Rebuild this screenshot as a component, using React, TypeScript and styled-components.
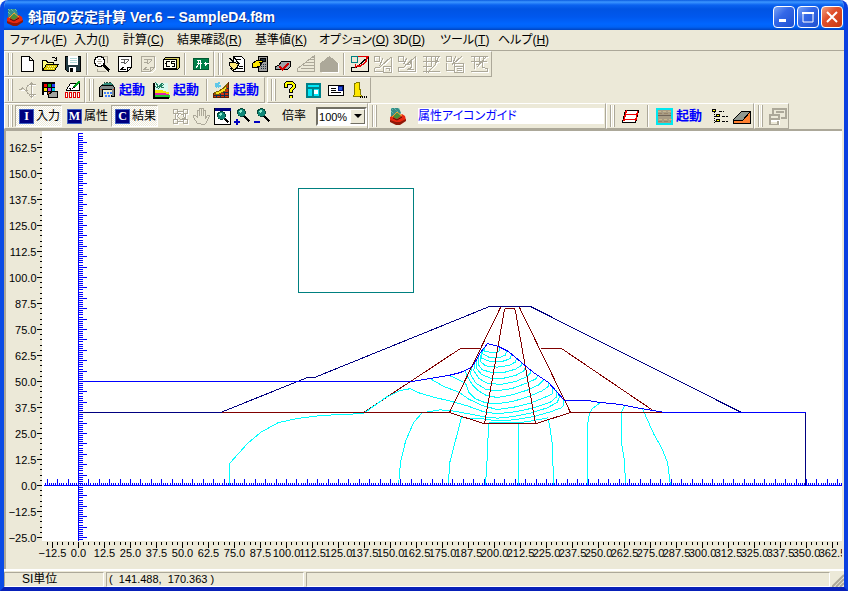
import React from "react";
import styled, { createGlobalStyle, css } from "styled-components";

const FACE = "#ece9d8";
const SHADOW = "#aca899";
const UI_FONT = '"Liberation Sans", "Noto Sans CJK JP", sans-serif';

const GlobalStyle = createGlobalStyle`
  * { box-sizing: border-box; }
  body { margin: 0; background: #fff; font: 12px/16px ${UI_FONT}; color: #000; }
  button, select, input { font: inherit; color: inherit; }
`;

const Window = styled.div`
  display: flex;
  flex-direction: column;
  min-height: 100vh;
  border: solid #0831d9;
  border-width: 0 4px 4px;
  border-color: #0831d9 #0a3fe0 #0820b8 #0a4be6;
  border-radius: 8px 8px 0 0;
  background: ${FACE};
  overflow: hidden;
`;

const TitleBar = styled.header`
  display: flex;
  align-items: center;
  height: 30px;
  margin: 0 -4px;
  padding: 3px 5px 0 6px;
  background: linear-gradient(#0a5be0 0, #3c96ff 2px, #0b63f0 5px, #0054e3 9px, #0058ee 17px, #0066ff 24px, #0062f5 27px, #0044c0 30px);
`;

const Title = styled.h1`
  flex: 1;
  margin: 0 0 0 5px;
  font: bold 14px/18px ${UI_FONT};
  color: #fff;
  text-shadow: 1px 1px #0a2f8f;
  white-space: nowrap;
`;

const WindowButtons = styled.div`
  display: flex;
  gap: 2px;
`;

const WindowButton = styled.button<{ $close?: boolean }>`
  display: grid;
  place-items: center;
  width: 22px;
  height: 22px;
  padding: 0;
  border: 1px solid #fff;
  border-radius: 4px;
  background: ${(p) =>
    p.$close
      ? "linear-gradient(135deg, #f0a080, #e0502c 40%, #c83810)"
      : "linear-gradient(135deg, #7ba5f5, #3468e8 40%, #1d50d0)"};
`;

const MenuBar = styled.nav`
  display: flex;
  height: 21px;
  padding: 0 0 0 6px;
  border-bottom: 1px solid ${SHADOW};
  font-feature-settings: "palt";
`;

const MenuItem = styled.button<{ $w: number }>`
  width: ${(p) => p.$w}px;
  padding: 0;
  border: 0;
  background: none;
  text-align: left;
  white-space: nowrap;
  line-height: 18px;
`;

const ToolRow = styled.div`
  display: flex;
  height: 26px;
`;

const Band = styled.div<{ $gap?: number }>`
  display: flex;
  align-items: center;
  height: 26px;
  margin-right: ${(p) => p.$gap ?? 0}px;
  border: 1px solid;
  border-color: #fff ${SHADOW} ${SHADOW} #fff;
`;

const Grip = styled.span`
  width: 5px;
  height: 22px;
  margin: 0 2px 0 3px;
  border: solid ${SHADOW};
  border-width: 0 1px 0 1px;
  background: linear-gradient(90deg, #fff 1px, ${FACE} 1px, ${FACE} 2px, #fff 2px);
`;

const Sep = styled.span<{ $m?: number }>`
  width: 2px;
  height: 22px;
  margin: 0 ${(p) => p.$m ?? 1}px;
  border-left: 1px solid ${SHADOW};
  border-right: 1px solid #fff;
`;

const Tool = styled.button<{ $w?: number }>`
  display: grid;
  place-items: center;
  width: ${(p) => p.$w ?? 23}px;
  height: 22px;
  padding: 0;
  border: 0;
  background: none;
`;

const ViewTools = styled.div`
  display: flex;
  margin-left: 10px;
`;

const Launch = styled.button`
  display: flex;
  align-items: center;
  gap: 3px;
  width: 54px;
  height: 22px;
  padding: 0 2px;
  border: 0;
  background: none;
  color: #0000ff;
  font-weight: bold;
  font-size: 13px;
  white-space: nowrap;
`;

const Toggle = styled.button<{ $on?: boolean }>`
  display: flex;
  align-items: center;
  gap: 2px;
  width: 47px;
  height: 22px;
  margin-right: 1px;
  padding: 0 0 0 3px;
  border: 1px solid transparent;
  background: none;
  white-space: nowrap;
  ${(p) =>
    p.$on &&
    css`
      border-color: ${SHADOW} #fff #fff ${SHADOW};
      background: repeating-conic-gradient(#fff 0 25%, ${FACE} 0 50%) 0 0 / 2px 2px;
    `}
`;

const Badge = styled.span`
  display: grid;
  place-items: center;
  width: 15px;
  height: 15px;
  border: 1px solid #4060c0;
  background: #000080;
  color: #fff;
  font: bold 12px/13px "Liberation Serif", serif;
`;

const ZoomLabel = styled.label`
  display: flex;
  align-items: center;
  gap: 10px;
  margin-left: 10px;
  white-space: nowrap;
`;

const SelectBox = styled.span`
  display: flex;
  position: relative;
  width: 51px;
  height: 19px;
  border: 2px solid;
  border-color: #716f64 #fff #fff #716f64;
  background: #fff;
`;

const Select = styled.select`
  appearance: none;
  width: 100%;
  padding: 0 0 0 1px;
  border: 0;
  background: none;
  font-size: 11px;
`;

const SelectArrow = styled.span`
  display: grid;
  place-items: center;
  position: absolute;
  top: 0;
  right: 0;
  width: 15px;
  height: 15px;
  border: 1px solid;
  border-color: #fff #716f64 #716f64 #fff;
  background: ${FACE};
  pointer-events: none;
`;

const GuideField = styled.input`
  width: 186px;
  height: 16px;
  margin: 0 1px 0 3px;
  padding: 0;
  border: 0;
  background: #fff;
  color: #0000ff;
  font-feature-settings: "palt";
`;

const Workspace = styled.main`
  flex: 1;
  display: grid;
  grid-template: minmax(410px, 1fr) 28px / 36px minmax(0, 1fr);
  margin-right: 2px;
  border: solid ${SHADOW};
  border-width: 2px 0 0 2px;
`;

const RulerText = css`
  font: 11px "Liberation Sans", sans-serif;
  shape-rendering: crispEdges;
`;

const LeftRuler = styled.svg`
  ${RulerText}
  width: 36px;
  height: 100%;
  overflow: visible;
`;

const Plot = styled.svg`
  width: 100%;
  height: 100%;
  background: #fff;
  shape-rendering: crispEdges;
`;

const BottomRuler = styled.svg`
  ${RulerText}
  grid-column: 1 / -1;
  width: 100%;
  height: 28px;
`;

const StatusBar = styled.footer`
  display: flex;
  align-items: flex-end;
  gap: 2px;
  height: 18px;
  border-top: 2px solid #fff;
`;

const StatusPanel = styled.div<{ $w?: number; $pad: number }>`
  flex: ${(p) => (p.$w ? `0 0 ${p.$w}px` : "1")};
  height: 15px;
  padding-left: ${(p) => p.$pad}px;
  border: 1px solid;
  border-color: ${SHADOW} #fff #fff ${SHADOW};
  line-height: 13px;
  white-space: pre;
`;

const Coordinates = styled.output`
  font-size: 11px;
`;

const SizeGrip = styled.svg`
  width: 12px;
  height: 14px;
`;

/* ---------- icons ---------- */

type IconProps = { children: React.ReactNode; w?: number };
const Icon = ({ children, w = 18 }: IconProps) => (
  <svg width={w} height="18" viewBox={`0 0 ${w} 18`} fill="none" stroke="#000" shapeRendering="crispEdges" aria-hidden="true">
    <g transform="translate(.5 .5)">{children}</g>
  </svg>
);

const AppIcon = () => (
  <svg width="17" height="18" viewBox="0 0 17 18" aria-hidden="true">
    <path d="M2 1h8l2 5-3 4H2z" fill="#388c88" />
    <path d="M2 1l2 2M5 1l4 4M2 4l4 4M9 1l2 2" stroke="#80d8c0" strokeDasharray="1 1" />
    <path d="M1 10l4-2 4 2 4-3 3 2 1 4-6 4H7l-6-3z" fill="#e82810" />
    <path d="M1 13l6 2h4l6-3v2l-6 4H7l-6-3z" fill="#901808" />
    <path d="M4 10l4-4 4 3-4 3z" fill="#489038" />
    <path d="M3 10l5-5 5 4" fill="none" stroke="#f8a820" />
    <path d="M4 11l4 2 5-3" fill="none" stroke="#501008" />
  </svg>
);
const NewIcon = () => <Icon><path fill="#fff" d="M3 1h8l4 4v11H3zM11 1v4h4" /></Icon>;
const OpenIcon = () => (
  <Icon>
    <path d="M10 3c2-2 4-1 5 1M15 1v4h-3" />
    <path fill="#ffff80" d="M1 15V5h4l1 2h6v2" />
    <path fill="#d8c800" d="M1 15l4-6h12l-4 6z" />
    <path stroke="#fff8a0" d="M6 11h8M5 13h8" strokeDasharray="1 1" />
  </Icon>
);
const SaveIcon = () => (
  <Icon>
    <path fill="#203840" d="M1 1h15v15H3l-2-2z" />
    <path fill="#fff" stroke="#fff" d="M4 1h9v8H4zM5 12h6v4H5z" />
    <path stroke="none" fill="#000" d="M5 12h3v4H5z" />
    <path stroke="#b0d8d8" d="M5 3h7M5 5h7M5 7h7" />
  </Icon>
);
const PreviewIcon = () => (
  <Icon>
    <path stroke={SHADOW} d="M7 1h7v6M4 13v3h8" />
    <circle cx="6" cy="6" r="5" fill="#fff" strokeWidth="1.4" />
    <path stroke={SHADOW} d="M4 4h3M3 6h5M4 8h3" />
    <path strokeWidth="3" d="M10 10l6 5" />
  </Icon>
);
const DocIcon = ({ off }: { off?: boolean }) => {
  const c = off ? SHADOW : "#000";
  return (
    <Icon>
      {off && <path stroke="#fff" d="M3 2h13v12l-3 3H3z" />}
      <path fill={off ? FACE : "#fff"} stroke={c} d="M2 1h13v11l-4 4H2z" />
      <path stroke={c} d="M15 12h-4v4M4 14l4-3M4 14h5" />
      <path stroke={off ? SHADOW : "#606060"} d="M4 4h8M4 7h4M8 4v4M8 9l4-4" />
    </Icon>
  );
};
const CsIcon = () => (
  <Icon>
    <path fill="#d8d060" d="M1 4l2-2h14v10l-2 2H1z" />
    <path fill="#fffff0" d="M1 4h13v9H1z" />
    <path strokeWidth="1.6" d="M7 6H4v5h3M12 6H9v2h3v3H9" />
    <path d="M2 8h1" />
  </Icon>
);
const ExitIcon = () => (
  <Icon>
    <path fill="#008048" stroke="#005830" d="M1 3h15v11H1z" />
    <path stroke="#fff" d="M4 5h4v8M6 5v4l-3 4M4 8h5M11 8h5M13 6v4M14 7v2" />
  </Icon>
);
const HandDocIcon = () => (
  <Icon>
    <path fill="#fff" d="M5 1h8l3 3v12H5z" />
    <path fill="#ffe878" d="M1 7h6l3 2-2 4-4 2-2-2h2l-3-3z" />
    <path strokeWidth="1.5" d="M5 1l6 8M1 3l5 4" />
    <path d="M8 13h6M10 11h4M8 4h4" />
  </Icon>
);
const HandCalcIcon = () => (
  <Icon>
    <path fill="#a0a0a0" d="M7 1h9v15H7z" />
    <path fill="#203040" d="M9 3h5v3H9z" />
    <path stroke="#203040" strokeDasharray="1 1" d="M9 9h6M9 11h6M9 13h6" />
    <path fill="#ffe800" d="M1 8l4-3h6v2H8l2 1-2 3-4 1H1z" />
  </Icon>
);
const CheckSlabIcon = () => (
  <Icon>
    <path fill="#a0a4a8" d="M1 11l3-1 3-4h9v5l-3 3H1z" />
    <path stroke="#d00000" strokeWidth="2" d="M5 11l3 3 6-6" />
  </Icon>
);
const StairsIcon = () => (
  <Icon w={20}>
    <path stroke="#fff" d="M2 18h18V1" />
    <path stroke={SHADOW} d="M1 16h17V0L1 13zM6 10h12M8 7h10M4 13h14M12 4h6M15 2h3" />
  </Icon>
);
const HouseIcon = () => (
  <Icon w={20}>
    <path stroke="#fff" d="M2 17h17V7" />
    <path fill={SHADOW} stroke={SHADOW} d="M1 8l9-7 8 7v8H1z" />
  </Icon>
);
const ArcIcon = () => (
  <Icon w={20}>
    <path d="M1 12h5L18 1v15H1z" />
    <path stroke="#e00000" strokeWidth="1.5" d="M7 1h11M17 1c-1 6-5 10-12 10M5 8v4" />
    <path stroke="#008080" strokeWidth="1.5" fill={FACE} d="M1 1h6v6H1z" />
  </Icon>
);
const offParts = [
  "M1 1h5v5H1zM1 12h5L18 1M1 12v4h8M18 1v9M9 3l-3 8M10 11h8v6h-8zM12 13h4v2",
  "M1 1h5v5H1zM1 12h5L18 1v15H1zM7 9h5l2-3v6l-4 2h6M9 3l-3 6",
  "M1 1h17M1 6h16M1 11h9M5 0v17M10 0v11M17 1l-3 8-7 7v1M1 16h17M14 1v8",
  "M1 1h5v5H1zM1 7v8h7M7 9L17 0M10 1L7 9M9 8h9v9H9zM9 11h9M11 13h5M11 15h5",
  "M1 1h17M1 6h16M5 0v13M10 1v6M17 1L7 12M6 9h4l3-3v6l5 1v3H6M1 16h17M14 1v5",
];
const OffIcon = ({ n }: { n: number }) => (
  <Icon w={20}>
    <path stroke="#fff" transform="translate(1 1)" d={offParts[n]} />
    <path stroke={SHADOW} d={offParts[n]} />
  </Icon>
);
const BranchIcon = () => (
  <Icon>
    <path stroke="#fff" d="M2 9h7M10 4h7M10 14h7M14 5v12" />
    <path stroke={SHADOW} d="M0 8h3l1-2 3 3h2M8 8c0-3 2-5 5-5h4M8 8c0 3 2 5 5 5h4M13 1v15M11 3l2-2 2 2M11 14l2 2 2-2" />
  </Icon>
);
const PaletteIcon = () => (
  <Icon>
    <path fill="#000" d="M1 1h12v12H1z" />
    <g stroke="none">
      <path fill="#f00000" d="M2 2h3v3H2z" /><path fill="#00b020" d="M6 2h3v3H6z" /><path fill="#2040ff" d="M10 2h3v3h-3z" />
      <path fill="#f8e000" d="M2 6h3v3H2z" /><path fill="#c030f0" d="M6 6h3v3H6z" /><path fill="#00c8e8" d="M10 6h3v3h-3z" />
      <path fill="#fff" d="M2 10h3v3H2z" /><path fill="#d86020" d="M6 10h3v3H6z" />
    </g>
    <path fill="#a0a4a0" d="M7 13l4-3h5v6H7z" />
  </Icon>
);
const MeterIcon = () => (
  <Icon>
    <path fill="#fff" d="M2 8l4-6h9v7H2z" />
    <path stroke="#00a020" strokeWidth="2" d="M9 6l6-6" />
    <path d="M5 7l2 1M8 7l3-2" />
    <path stroke="#e00000" fill="#fff" d="M1 11h2v5H1zM5 11h2v5H5zM9 11h2v5H9zM13 11h2v5h-2z" />
  </Icon>
);
const PrinterIcon = () => (
  <Icon>
    <path fill="#308878" stroke="#284838" strokeDasharray="2 1" d="M3 4l3-3h6l3 3z" />
    <path fill="#808888" d="M1 6l2-2h11l2 2v9h-3V8H4v7H1z" />
    <path fill="#f0f0d0" stroke="none" d="M4 8h9v5H4z" />
    <path stroke="#e04010" d="M2 8h1M14 8h1" />
    <path stroke="#4080ff" strokeWidth="2" strokeDasharray="2 1" d="M5 11h8M6 14h6" />
  </Icon>
);
const SlopeChartIcon = () => (
  <Icon>
    <path stroke="none" fill="#d8f8f0" d="M2 1h13v9H2z" />
    <path stroke="none" fill="#f0e800" d="M2 8l5 0 9 3v2H2z" />
    <path stroke="none" fill="#e020b0" d="M2 11h8l6 2H2z" />
    <path stroke="none" fill="#20c830" d="M2 13h15v3H2z" />
    <path stroke="#208060" d="M3 1l3 4 5-4M12 2L6 7l-3-2M5 5l7 1" />
    <path strokeWidth="2" d="M1 1v15h15" />
  </Icon>
);
const MeshSlopeIcon = () => (
  <Icon>
    <path fill="#d03010" stroke="#602000" d="M1 12l7-2 8-9v15H1z" />
    <path stroke="#103050" d="M4 11v5M8 10v6M12 6v10M1 14h15M6 11h10M10 7h6" />
    <path fill="#f8e020" stroke="#806000" d="M2 11c7-2 9-4 13-9l-2 7c-4 3-6 4-10 4z" />
    <path stroke="#60c8e8" strokeWidth="2" d="M3 2l4 4M7 1L3 6M2 4h6" />
  </Icon>
);
const HelpIcon = () => (
  <Icon>
    <path strokeWidth="4" d="M4 6V3l2-2h4l2 2v3L9 9v2M9 13v3" />
    <path stroke="#ffff00" strokeWidth="2" d="M4 5V3l2-2h4l2 2v3L9 9v1M9 14v2" />
  </Icon>
);
const PanelIcon = () => (
  <Icon>
    <path fill="#00e8f8" stroke="#008088" strokeWidth="2" d="M2 2h13v13H2zM2 6h13M8 6v9" />
    <path fill="#fff" stroke="#fff" d="M10 9h3v3h-3z" />
  </Icon>
);
const CardIcon = () => (
  <Icon>
    <path fill="#fff" d="M1 4h15v10H1z" />
    <path d="M3 7h5M3 9h5M3 11h10" />
    <path fill="#2858d8" stroke="#001080" d="M11 5h4v4h-4z" />
  </Icon>
);
const BootIcon = () => (
  <Icon>
    <path fill="#ffe800" stroke="#807800" d="M4 2l3-1h2v6l1 2v4l2 2H3l1-3z" />
    <path strokeDasharray="1 1" strokeWidth="2" d="M9 15h8" />
  </Icon>
);
const nodesPath = "M2 2h4v4H2zM12 2h4v4h-4zM2 12h4v4H2zM12 12h4v4h-4zM6 4h6M4 6v6M14 6v6M6 14h6M7 6l5 1 1 4-4 1-3-3z";
const NodesIcon = () => (
  <Icon>
    <path stroke="#fff" transform="translate(1 1)" d={nodesPath} />
    <path stroke={SHADOW} d={nodesPath} />
  </Icon>
);
const HandIcon = () => (
  <Icon>
    <path stroke={SHADOW} fill={FACE} d="M5 16l-4-6v-2h2l2 2V3h2v5V1h2v7V1h2v7V3h2v8l2-3h2l-3 7-2 2z" />
  </Icon>
);
const Glass = ({ minus, plus, frame }: { minus?: boolean; plus?: boolean; frame?: boolean }) => (
  <Icon>
    {frame && <path fill="#fff" d="M1 1h16v16H1z" />}
    {frame && <path stroke="#000080" strokeWidth="3" d="M1 2h16" />}
    <path strokeWidth="2.5" d={frame ? "M10 10l5 5" : "M10 8l6 6"} />
    <circle cx="8" cy={frame ? 8 : 5} r="4" fill="#108878" stroke="#084838" />
    <path stroke="#90f0d0" strokeWidth="1.5" d={frame ? "M6 8l2-2" : "M6 5l2-2"} />
    {(plus || minus) && <path stroke="#0000c0" strokeWidth="2" d="M0 14h6" />}
    {plus && <path stroke="#0000c0" strokeWidth="2" d="M3 11v6" />}
  </Icon>
);
const ShearIcon = () => (
  <Icon w={20}>
    <path fill="#fff" d="M5 3h13l-3 12H2z" />
    <path stroke="#f00000" strokeWidth="1.5" d="M5 7h11M4 12h11M6 3L3 14M17 4l-2 10" />
  </Icon>
);
const TextureIcon = () => (
  <Icon>
    <path fill="#a89c84" stroke="#00e8f0" strokeWidth="2" d="M1 1h15v15H1z" />
    <path stroke="#c8b890" strokeDasharray="3 2" d="M2 4h13M3 12h13" />
    <path stroke="#706458" d="M2 8h13" />
    <path stroke="#988468" strokeDasharray="4 2" d="M2 6h13M2 14h13" />
  </Icon>
);
const TreeIcon = () => (
  <Icon>
    <path strokeDasharray="1 1" d="M4 4v12M4 9h3M4 14h3" />
    <path strokeDasharray="3 1" d="M8 4h5M11 9h6M11 14h6" />
    <path fill="#ffff00" d="M2 2h3v2H2zM6 7h3v2H6zM6 12h3v2H6z" />
  </Icon>
);
const RampIcon = () => (
  <Icon w={20}>
    <path fill="#909890" d="M1 12l8-8h9l-8 9H1z" />
    <path fill="#ff8030" d="M1 13h9l8-9v12H1z" />
  </Icon>
);
const WindowsIcon = () => (
  <Icon w={20}>
    <path stroke="#fff" transform="translate(1 1)" d="M5 1h13v9h-6M2 7h8v6H2zM1 12h10v5H1z" />
    <path stroke={SHADOW} strokeWidth="2" d="M5 6V1h13v9h-5M8 4h8M2 7h9v4H2zM2 12v5h8v-4" />
  </Icon>
);

/* ---------- drawing ---------- */

const PX_PER_UNIT = 2.08;
const X0 = 78;
const Y0 = 485;
const sx = (v: number) => Math.round(X0 + v * PX_PER_UNIT);
const sy = (v: number) => Math.round(Y0 - v * PX_PER_UNIT);
const steps = (from: number, to: number, step: number) =>
  Array.from({ length: Math.round((to - from) / step) + 1 }, (_, i) => from + i * step);
const label = (v: number) => v.toFixed(1).replace("-", "−");

const VerticalRuler = () => (
  <LeftRuler>
    <g transform="translate(-5.5 -130.5)" stroke="#000">
      {steps(-25, 167.5, 2.5).map((v) => (
        <path key={v} d={`M${v % 12.5 ? 39 : 36} ${sy(v)}H42`} />
      ))}
      <g stroke="none" textAnchor="end">
        {steps(-25, 162.5, 12.5).map((v) => (
          <text key={v} x="36" y={sy(v) + 4}>{label(v)}</text>
        ))}
      </g>
    </g>
  </LeftRuler>
);

const HorizontalRuler = () => (
  <BottomRuler>
    <g transform="translate(-5.5 .5)" stroke="#000">
      {steps(-15, 367.5, 2.5).map((v) => (
        <path key={v} d={`M${sx(v)} 0V${v % 12.5 ? 3 : 6}`} />
      ))}
      <g stroke="none" textAnchor="middle">
        {steps(-12.5, 362.5, 12.5).map((v) => (
          <text key={v} x={sx(v)} y="15">{label(v)}</text>
        ))}
      </g>
    </g>
  </BottomRuler>
);

const axisPath = [
  `M43 ${Y0}H842`,
  `M78 132V540`,
  ...steps(-16, 367, 1).map((v) => `M${sx(v)} ${Y0}v${v % 5 ? -3 : -7}`),
  ...steps(-26, 169, 1).map((v) => `M78 ${sy(v)}h${v % 5 ? 4 : 8}`),
].join("");

/* Equipotential lines of the core, on a grid three times finer than the screen. */
const coreLines = [
  "253,172 253,184 275,185 290,187 298,180 298,168",
  "248,176 247,190 265,200 300,200 314,194 318,182",
  "243,182 244,203 268,213 305,213 328,205 333,194",
  "238,188 240,213 255,226 290,230 325,225 344,215 348,205",
  "233,197 233,222 245,238 275,246 310,246 345,236 362,225 362,215",
  "228,205 228,233 243,252 270,263 310,263 345,255 372,240 375,227",
  "223,214 220,240 235,264 260,278 300,282 345,273 378,259 390,248 390,240",
  "214,232 209,250 225,277 255,296 290,301 335,294 375,279 405,266 412,255",
  "193,241 203,262 215,282 232,300 258,315 290,321 335,313 380,299 415,283 430,268",
  "145,254 195,278 205,305 225,325 255,337 290,340 340,332 385,318 425,301 443,288 445,275",
  "90,265 130,288 175,305 205,326 245,345 290,357 340,350 390,338 430,322 455,310 458,290",
  "0,300 30,295 55,307 100,320 150,332 200,346 250,364 290,370 350,363 400,352 450,335 467,320 467,300",
  "65,367 120,358 155,361 200,369 250,379 290,383 340,378 390,368 440,352 470,336 476,322 475,308",
  "182,382 240,384 290,391 340,388 400,378 450,364 482,352 490,345 490,330",
  "265,397 310,397 355,397 400,390 443,382",
];

const flowLines = [
  "229,485 229,463 247,443 260,432 278,422 297,418 320,415 363,413 377,403 385,397 400,390 410,388",
  "422,412 413,422 405,441 400,462 398,485",
  "461,417 455,440 449,463 448,485",
  "488,423 487,453 485,485",
  "518,423 518,485",
  "548,420 549,424 552,445 553,485",
  "600,402 592,408 589,413 587,424 587,485",
  "624,405 621,412 621,443 624,460 625,485",
  "642,408 645,415 653,433 661,447 667,462 670,485",
];

const CrossSection = () => (
  <Plot role="img" aria-label="斜面断面図">
    <g transform="translate(-41.5 -130.5)" fill="none">
      <path stroke="#008080" d="M298 188H413V292H298z" />
      <path stroke="#800000" d="M363 412L460 348H480M540 348H561L654 411" />
      <g stroke="#00ffff">
        {flowLines.map((p) => <polyline key={p} points={p} />)}
        <g transform="translate(400 290) scale(.33333)">
          {coreLines.map((p) => <polyline key={p} points={p} vectorEffect="non-scaling-stroke" />)}
        </g>
      </g>
      <g stroke="#800000">
        <path d="M220 412H449M570 412H662" />
        <path d="M500 307L449 412L483 423H536L570 412L519 307" />
        <path d="M484 423L504 309L505 308H514L515 311L535 423" />
      </g>
      <path stroke="#0000ff" d={axisPath} />
      <path stroke="#000080" d="M79 412H220L307 377H314L489 306H530L741 412M805 412V485" />
      <polyline
        stroke="#0000ff"
        points="79,381 411,381 430,378 448,375 460,372 471,367 475,361 480,352 487,343 498,346 508,351 521,362 533,372 548,382 564,400 587,400 600,402 620,404 640,408 665,412 805,412"
      />
    </g>
  </Plot>
);

/* ---------- page ---------- */

const menus: [string, string, number][] = [
  ["ファイル", "F", 64], ["入力", "I", 49], ["計算", "C", 54], ["結果確認", "R", 78], ["基準値", "K", 64],
  ["オプション", "O", 74], ["3D", "D", 47], ["ツール", "T", 58], ["ヘルプ", "H", 58],
];

export default function App() {
  return (
    <Window>
      <GlobalStyle />
      <TitleBar>
        <AppIcon />
        <Title>斜面の安定計算 Ver.6 − SampleD4.f8m</Title>
        <WindowButtons>
          <WindowButton aria-label="最小化"><svg width="14" height="14"><path d="M2 9h7v3H2z" fill="#fff" /></svg></WindowButton>
          <WindowButton aria-label="最大化"><svg width="14" height="14"><path d="M2 3h10v9H2z" fill="none" stroke="#fff" /><path d="M1 2h12v2H1z" fill="#fff" /></svg></WindowButton>
          <WindowButton $close aria-label="閉じる"><svg width="14" height="14"><path d="M2 2l10 10M12 2L2 12" stroke="#fff" strokeWidth="2" /></svg></WindowButton>
        </WindowButtons>
      </TitleBar>
      <MenuBar>
        {menus.map(([text, key, w]) => (
          <MenuItem key={key} $w={w}>{text}(<u>{key}</u>)</MenuItem>
        ))}
      </MenuBar>
      <ToolRow>
        <Band>
          <Grip />
          <Tool aria-label="新規"><NewIcon /></Tool>
          <Tool aria-label="開く"><OpenIcon /></Tool>
          <Tool aria-label="保存"><SaveIcon /></Tool>
          <Sep $m={2} />
          <Tool aria-label="プレビュー"><PreviewIcon /></Tool>
          <Tool aria-label="計算書"><DocIcon /></Tool>
          <Tool aria-label="報告書" disabled><DocIcon off /></Tool>
          <Tool aria-label="CS"><CsIcon /></Tool>
          <Sep $m={2} />
          <Tool $w={25} aria-label="終了"><ExitIcon /></Tool>
        </Band>
        <Band>
          <Grip />
          <Tool aria-label="入力編集"><HandDocIcon /></Tool>
          <Tool aria-label="計算実行"><HandCalcIcon /></Tool>
          <Tool aria-label="チェック"><CheckSlabIcon /></Tool>
          <Tool aria-label="段切り" disabled><StairsIcon /></Tool>
          <Tool aria-label="形状" disabled><HouseIcon /></Tool>
          <Sep $m={3} />
          <Tool aria-label="円弧"><ArcIcon /></Tool>
          {[0, 1, 2, 3, 4].map((n) => (
            <Tool key={n} $w={24} aria-label={`結果図 ${n + 1}`} disabled><OffIcon n={n} /></Tool>
          ))}
        </Band>
      </ToolRow>
      <ToolRow>
        <Band>
          <Grip />
          <Tool aria-label="分岐" disabled><BranchIcon /></Tool>
          <Tool aria-label="配色"><PaletteIcon /></Tool>
          <Tool aria-label="桁数"><MeterIcon /></Tool>
        </Band>
        <Band $gap={2}>
          <Grip />
          <Launch><PrinterIcon />起動</Launch>
          <Launch><SlopeChartIcon />起動</Launch>
          <Sep $m={2} />
          <Launch><MeshSlopeIcon />起動</Launch>
        </Band>
        <Band>
          <Grip />
          <Tool aria-label="ヘルプ"><HelpIcon /></Tool>
          <Tool aria-label="情報"><PanelIcon /></Tool>
          <Tool aria-label="連絡先"><CardIcon /></Tool>
          <Tool aria-label="案内"><BootIcon /></Tool>
        </Band>
      </ToolRow>
      <ToolRow>
        <Band>
          <Grip />
          <Toggle $on aria-pressed="true"><Badge>I</Badge>入力</Toggle>
          <Toggle aria-pressed="false"><Badge>M</Badge>属性</Toggle>
          <Toggle $on aria-pressed="true"><Badge>C</Badge>結果</Toggle>
          <ViewTools>
            <Tool $w={21} aria-label="ノード" disabled><NodesIcon /></Tool>
            <Tool $w={21} aria-label="移動" disabled><HandIcon /></Tool>
            <Tool $w={21} aria-label="全体"><Glass frame /></Tool>
            <Tool $w={20} aria-label="拡大"><Glass plus /></Tool>
            <Tool $w={20} aria-label="縮小"><Glass minus /></Tool>
          </ViewTools>
          <ZoomLabel>
            倍率
            <SelectBox>
              <Select defaultValue="100%"><option>100%</option><option>200%</option></Select>
              <SelectArrow><svg width="8" height="4"><path d="M0 0h8L4 4z" /></svg></SelectArrow>
            </SelectBox>
          </ZoomLabel>
        </Band>
        <Band>
          <Grip />
          <Tool $w={36} aria-label="属性アイコン"><AppIcon /></Tool>
          <GuideField aria-label="ガイド" readOnly value="属性アイコンガイド" />
        </Band>
        <Band>
          <Grip />
          <Tool $w={26} aria-label="断面"><ShearIcon /></Tool>
          <Sep $m={4} />
          <Launch><TextureIcon />起動</Launch>
          <Tool aria-label="ツリー"><TreeIcon /></Tool>
          <Tool aria-label="盛土"><RampIcon /></Tool>
        </Band>
        <Band>
          <Grip />
          <Tool aria-label="ウィンドウ" disabled><WindowsIcon /></Tool>
        </Band>
      </ToolRow>
      <Workspace>
        <VerticalRuler />
        <CrossSection />
        <HorizontalRuler />
      </Workspace>
      <StatusBar>
        <StatusPanel $w={100} $pad={17}>SI単位</StatusPanel>
        <StatusPanel $w={198} $pad={2}><Coordinates>{"(  141.488,  170.363 )"}</Coordinates></StatusPanel>
        <StatusPanel $pad={2} />
        <SizeGrip><path d="M12 2L0 14M12 6L4 14M12 10L8 14" stroke={SHADOW} strokeWidth="2" /></SizeGrip>
      </StatusBar>
    </Window>
  );
}
